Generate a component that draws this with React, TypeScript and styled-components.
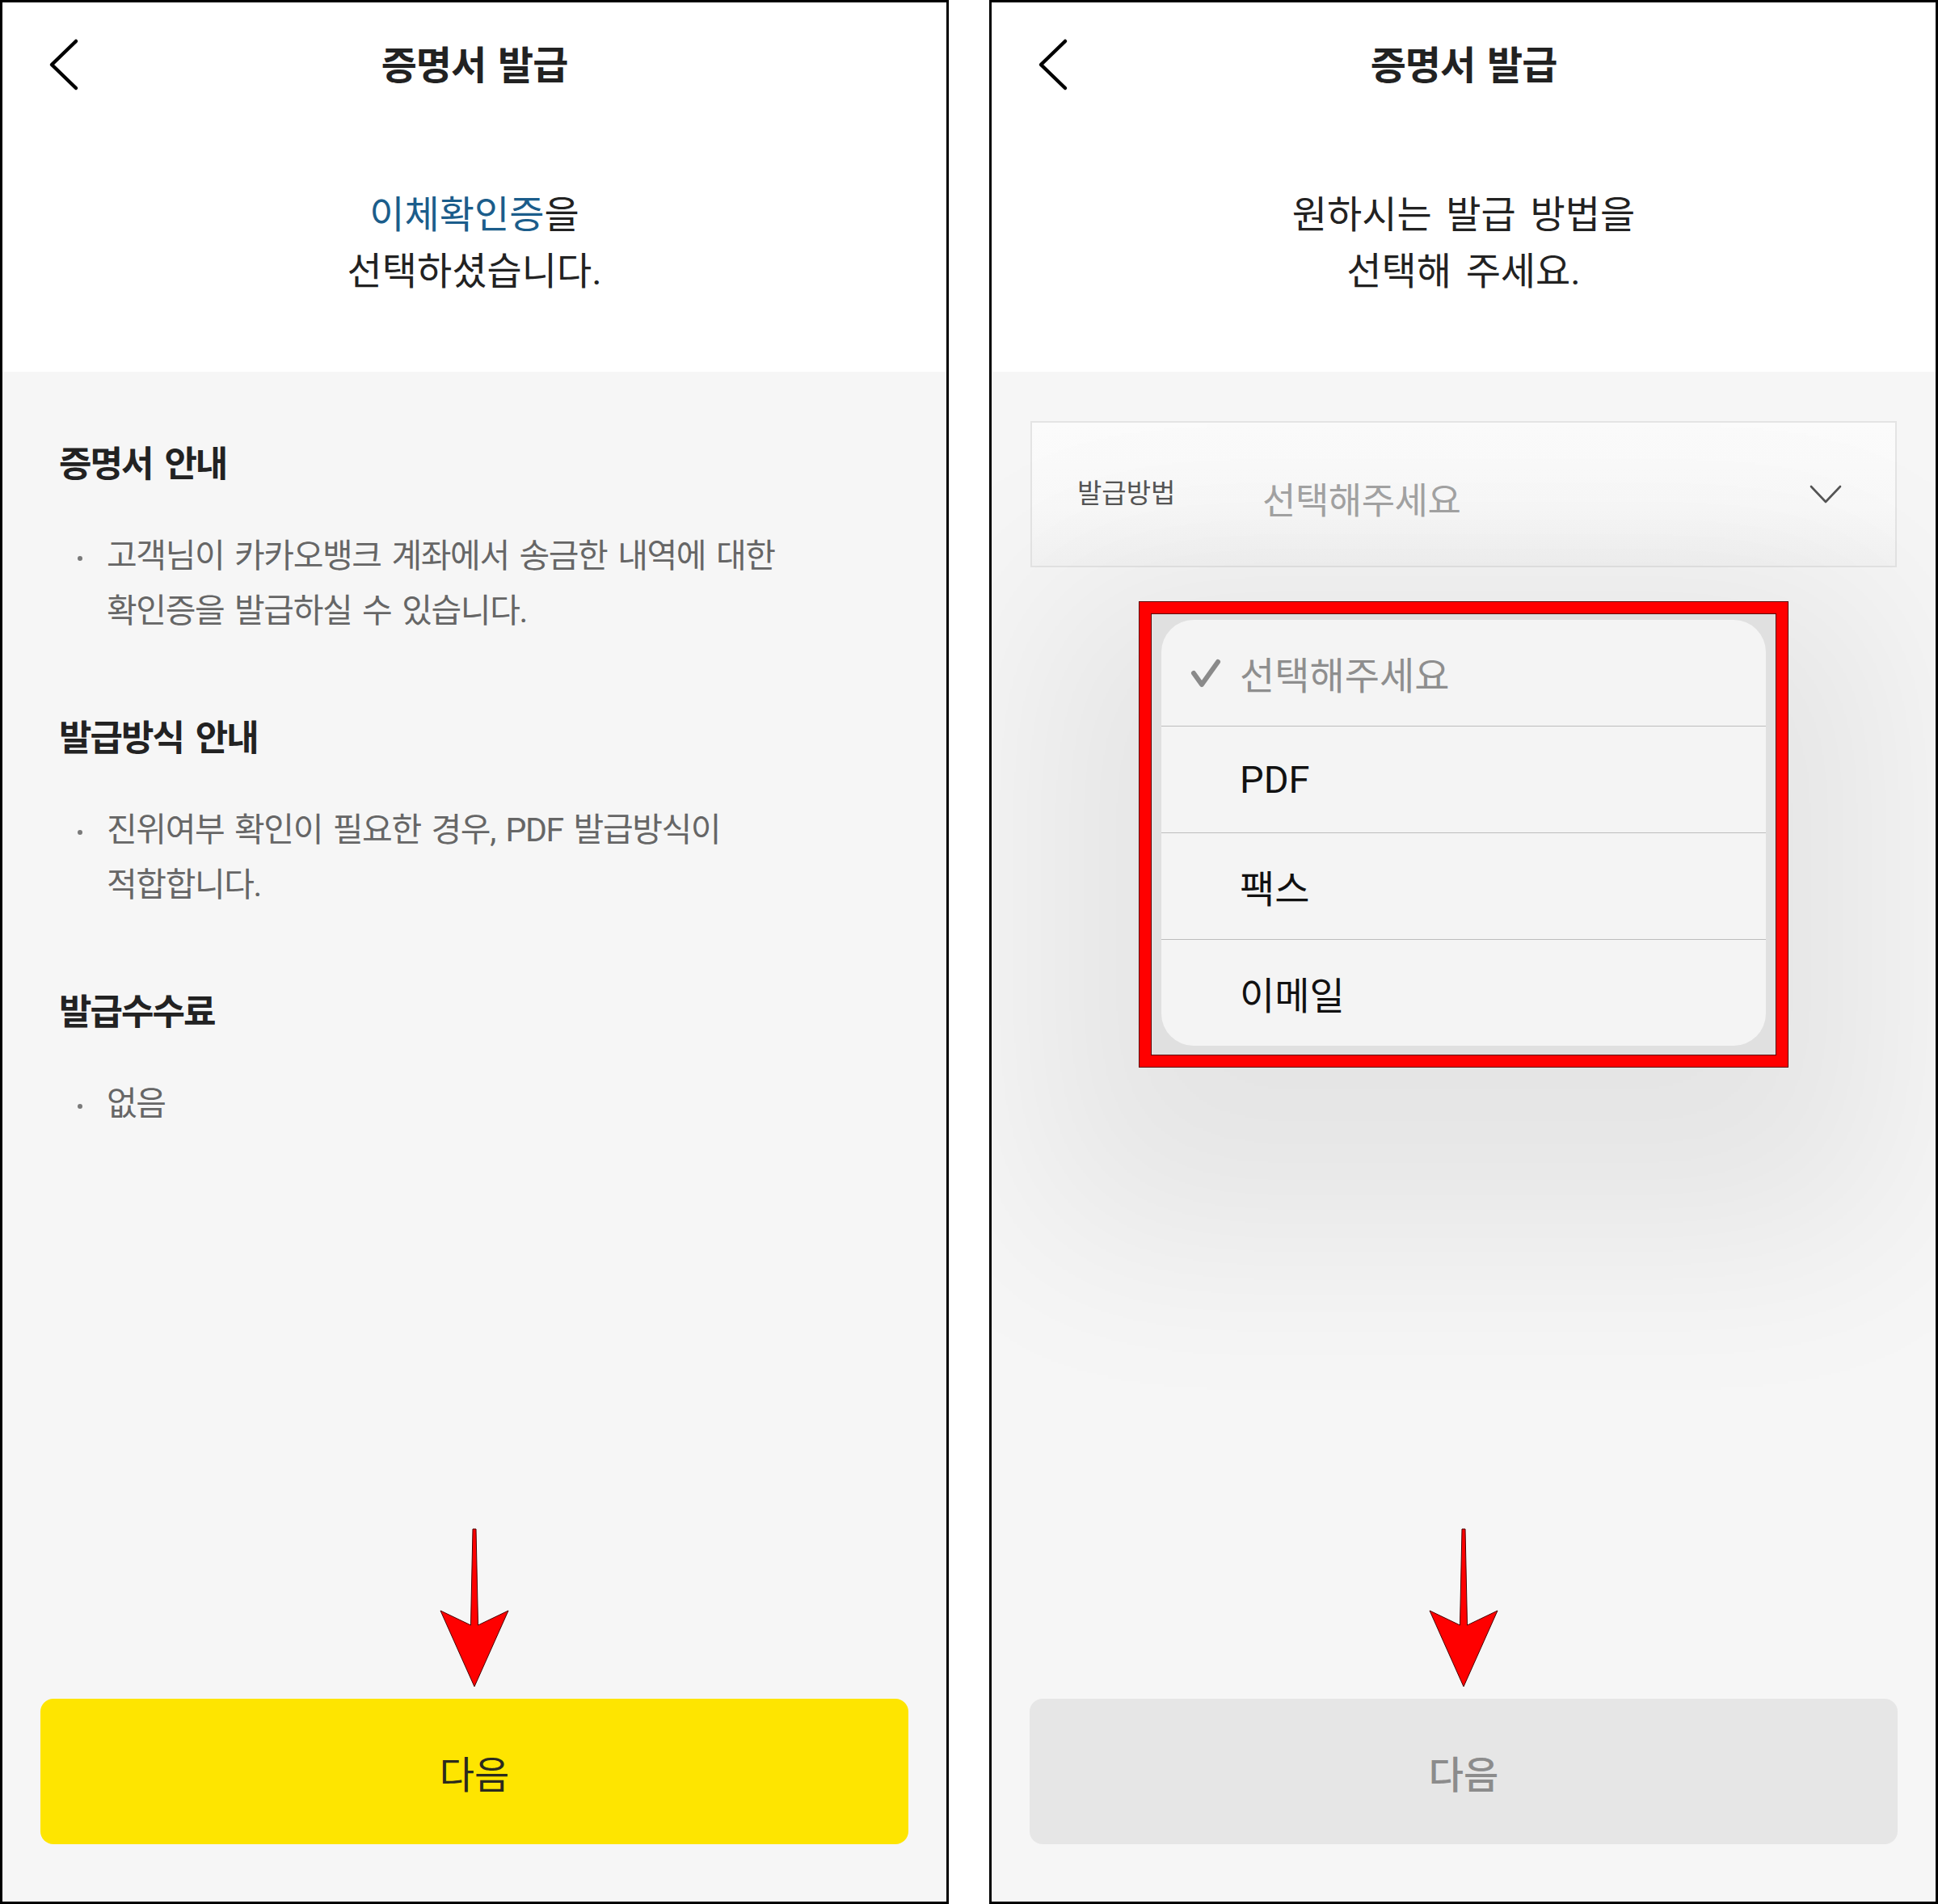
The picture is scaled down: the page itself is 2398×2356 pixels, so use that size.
import styled, { createGlobalStyle } from "styled-components";

const GlobalStyle = createGlobalStyle`
  html, body {
    margin: 0;
    padding: 0;
    background: #ffffff;
  }
  body {
    font-family: Roboto, "Noto Sans CJK KR", "Noto Sans", sans-serif;
  }
  * {
    box-sizing: border-box;
  }
`;

const infoSections = [
  {
    title: "증명서 안내",
    lines: ["고객님이 카카오뱅크 계좌에서 송금한 내역에 대한", "확인증을 발급하실 수 있습니다."],
  },
  {
    title: "발급방식 안내",
    lines: ["진위여부 확인이 필요한 경우, PDF 발급방식이", "적합합니다."],
  },
  {
    title: "발급수수료",
    lines: ["없음"],
  },
];

const methods = [
  { label: "선택해주세요", selected: true },
  { label: "PDF", selected: false },
  { label: "팩스", selected: false },
  { label: "이메일", selected: false },
];

const BackIcon = () => (
  <svg width="40" height="66" viewBox="0 0 40 66" fill="none">
    <polyline points="34,4 4,33 34,62" stroke="#000" strokeWidth="4.5" strokeLinecap="round" strokeLinejoin="round" />
  </svg>
);

const ChevronDown = () => (
  <svg width="40" height="24" viewBox="0 0 40 24" fill="none">
    <polyline points="2,2 20,21 38,2" stroke="#555" strokeWidth="2.6" strokeLinecap="round" strokeLinejoin="round" />
  </svg>
);

const CheckIcon = () => (
  <svg width="38" height="36" viewBox="0 0 38 36" fill="none">
    <path d="M4 18 L14 32 L34 4" stroke="#8a8a8a" strokeWidth="6" strokeLinecap="round" strokeLinejoin="round" />
  </svg>
);

const RedArrow = () => (
  <svg width="90" height="200" viewBox="0 0 90 200">
    <polygon
      points="43,2 47,2 49.5,121 87,103 45,197 3,103 40.5,121"
      fill="#ff0000"
      stroke="#4a0000"
      strokeWidth="1"
      strokeLinejoin="miter"
    />
  </svg>
);

const Header = () => (
  <TopBar>
    <BackButton>
      <BackIcon />
    </BackButton>
    <Title>증명서 발급</Title>
    <span />
  </TopBar>
);

const App = () => {
  return (
    <>
      <GlobalStyle />
      <Page>
        <Panel>
          <Header />
          <Hero>
            <Accent>이체확인증</Accent>을
            <br />
            선택하셨습니다.
          </Hero>
          <Body>
            <InfoList>
              {infoSections.map((section) => (
                <Section key={section.title}>
                  <SectionTitle>{section.title}</SectionTitle>
                  <BulletItem>
                    <Marker>
                      <Dot />
                    </Marker>
                    <BulletText>
                      {section.lines.map((line, i) => (
                        <div key={i}>{line}</div>
                      ))}
                    </BulletText>
                  </BulletItem>
                </Section>
              ))}
            </InfoList>
            <Footer>
              <NextButton active>다음</NextButton>
            </Footer>
          </Body>
          <ArrowMark>
            <RedArrow />
          </ArrowMark>
        </Panel>

        <Panel>
          <Header />
          <Hero>
            원하시는 발급 방법을
            <br />
            선택해 주세요.
          </Hero>
          <Body>
            <SelectArea>
              <SelectBox>
                <SelectLabel>발급방법</SelectLabel>
                <SelectValue>선택해주세요</SelectValue>
                <ChevronDown />
              </SelectBox>
              <Highlight>
                <Popover>
                  {methods.map((m) => (
                    <OptionRow key={m.label}>
                      <CheckCell>{m.selected && <CheckIcon />}</CheckCell>
                      <OptionText muted={m.selected}>{m.label}</OptionText>
                    </OptionRow>
                  ))}
                </Popover>
              </Highlight>
            </SelectArea>
            <Footer>
              <NextButton active={false}>다음</NextButton>
            </Footer>
          </Body>
          <ArrowMark>
            <RedArrow />
          </ArrowMark>
        </Panel>
      </Page>
    </>
  );
};

export default App;

const Page = styled.div`
  display: flex;
  gap: 50px;
  width: 2398px;
  height: 2356px;
  background: #ffffff;
`;

const Panel = styled.div`
  position: relative;
  width: 1174px;
  height: 100%;
  border: 3px solid #000000;
  display: flex;
  flex-direction: column;
  background: #ffffff;
  overflow: hidden;
`;

const TopBar = styled.header`
  display: grid;
  grid-template-columns: 1fr auto 1fr;
  align-items: center;
  height: 154px;
`;

const BackButton = styled.div`
  display: flex;
  align-items: center;
  padding-left: 57px;
`;

const Title = styled.h1`
  margin: 0 0 6px;
  font-size: 48px;
  font-weight: 700;
  letter-spacing: -1px;
  word-spacing: 4px;
  color: #222222;
`;

const Hero = styled.div`
  padding: 74px 0 89px;
  text-align: center;
  font-size: 47px;
  line-height: 70px;
  letter-spacing: 0;
  word-spacing: 6px;
  color: #222222;
`;

const Accent = styled.span`
  color: #1b5d8b;
`;

const Body = styled.div`
  flex: 1;
  display: flex;
  flex-direction: column;
  background: #f6f6f6;
`;

const InfoList = styled.div`
  display: flex;
  flex-direction: column;
  gap: 94px;
  padding: 85px 70px 0;
`;

const Section = styled.section`
  display: flex;
  flex-direction: column;
  gap: 49px;
`;

const SectionTitle = styled.h2`
  margin: 0;
  font-size: 44px;
  line-height: 60px;
  font-weight: 700;
  letter-spacing: -2px;
  word-spacing: 6px;
  color: #222222;
`;

const BulletItem = styled.div`
  display: grid;
  grid-template-columns: 59px 1fr;
`;

const Marker = styled.div`
  padding: 34px 0 0 23px;
`;

const Dot = styled.div`
  width: 6px;
  height: 6px;
  border-radius: 50%;
  background: #7a7a7a;
`;

const BulletText = styled.div`
  font-size: 41px;
  line-height: 68px;
  letter-spacing: -1.4px;
  word-spacing: 4px;
  color: #666666;
`;

const Footer = styled.div`
  margin-top: auto;
  padding: 0 47px 71px;
`;

const NextButton = styled.div<{ active: boolean }>`
  display: flex;
  align-items: center;
  justify-content: center;
  height: 180px;
  border-radius: 16px;
  background: ${({ active }) => (active ? "#fee500" : "#e6e6e6")};
  color: ${({ active }) => (active ? "#2b2a1e" : "#8c8c8c")};
  font-size: 47px;
  font-weight: ${({ active }) => (active ? 400 : 500)};
  letter-spacing: 0;
`;

const ArrowMark = styled.div`
  position: absolute;
  top: 1887px;
  left: 50%;
  transform: translateX(-50%);
  line-height: 0;
`;

const SelectArea = styled.div`
  display: flex;
  flex-direction: column;
  align-items: center;
  padding: 61px 48px 0;
`;

const SelectBox = styled.div`
  display: flex;
  align-items: center;
  width: 100%;
  height: 181px;
  padding: 0 66px 0 56px;
  border: 2px solid #e4e4e4;
  background: linear-gradient(180deg, #fbfbfb 0%, #f9f9f9 60%, #f3f3f3 100%);
`;

const SelectLabel = styled.div`
  flex-shrink: 0;
  width: 229px;
  margin-bottom: 8px;
  font-size: 33px;
  letter-spacing: 0;
  color: #555555;
`;

const SelectValue = styled.div`
  flex: 1;
  margin-top: 10px;
  font-size: 45px;
  letter-spacing: -0.5px;
  color: #a3a3a3;
`;

const Highlight = styled.div`
  width: 802px;
  margin-top: 43px;
  padding: 8px 13px 12px;
  border: 14px solid #ff0000;
  background: #e0e0e0;
  box-shadow: inset 0 0 0 1px #5a0000, 0 0 0 1px #5a0000, 0 90px 230px 120px rgba(0, 0, 0, 0.07);
`;

const Popover = styled.div`
  display: flex;
  flex-direction: column;
  border-radius: 40px;
  overflow: hidden;
  background: #f4f4f4;
`;

const OptionRow = styled.div`
  display: grid;
  grid-template-columns: 97px 1fr;
  align-items: center;
  height: 131px;

  & + & {
    height: 132px;
    border-top: 1px solid #bdbdbd;
  }
`;

const CheckCell = styled.div`
  display: flex;
  align-items: center;
  padding-left: 36px;
`;

const OptionText = styled.div<{ muted: boolean }>`
  font-size: 47px;
  letter-spacing: 0;
  color: ${({ muted }) => (muted ? "#8e8e8e" : "#111111")};
`;
